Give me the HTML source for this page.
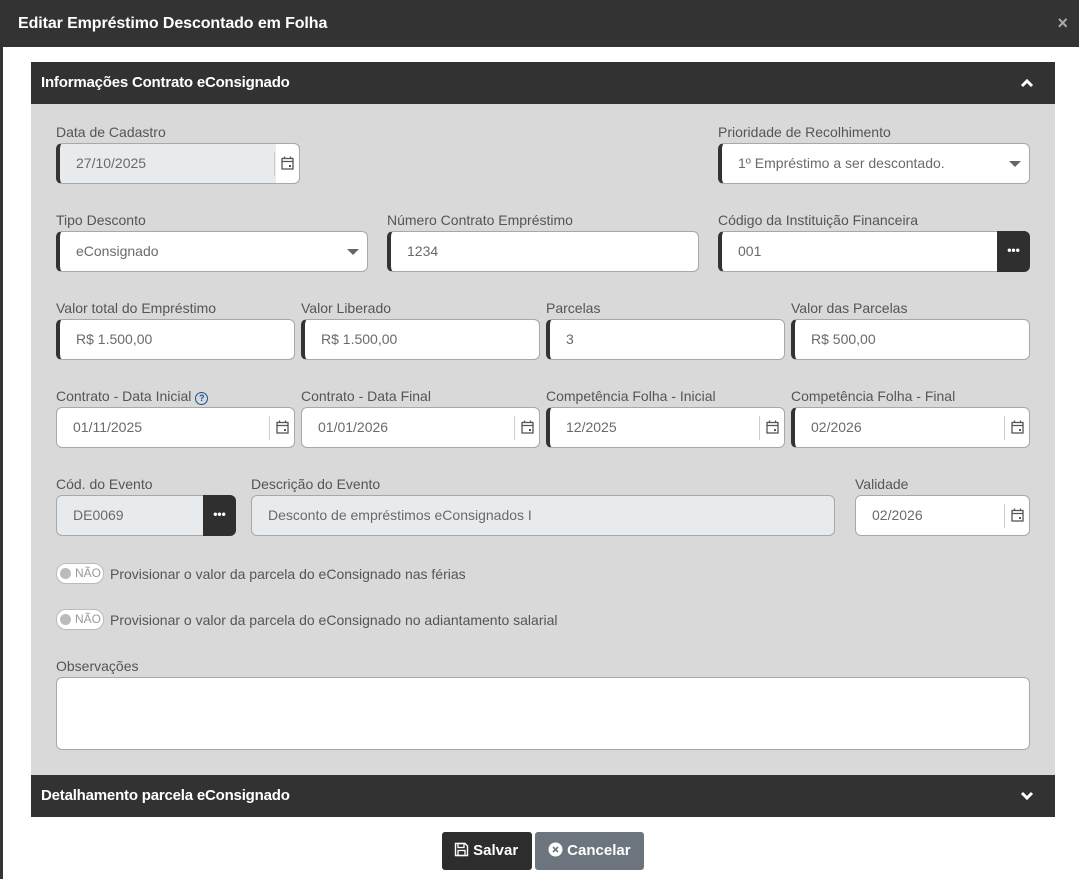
<!DOCTYPE html>
<html><head><meta charset="utf-8"><style>
*{box-sizing:border-box;margin:0;padding:0}
body{width:1079px;height:879px;background:#fff;font-family:"Liberation Sans",sans-serif;position:relative;overflow:hidden}
.a{position:absolute}
.top{left:0;top:0;width:1079px;height:47px;background:#333;color:#fff;font-weight:bold;font-size:16px;line-height:47px;padding-left:18px;letter-spacing:-0.1px}
.lstrip{left:0;top:47px;width:3px;height:832px;background:#333}
.ph{left:31px;width:1024px;height:42px;background:#323232;color:#fff;font-weight:bold;font-size:15px;line-height:42px;padding-left:10px;letter-spacing:-0.2px}
.body{left:31px;top:104px;width:1024px;height:671px;background:#d9d9d9}
.lb{font-size:14px;color:#555}
.in{height:41px;background:#fff;border:1px solid #a8a8a8;border-radius:6px;font-size:14px;color:#6a6a6a;line-height:39px;padding-left:16px}
.req{border-left:4px solid #333}
.gr{background:#e8ebee}
.cal{position:absolute;right:0;top:8px;width:25px;height:24px;border-left:1px solid #ccc}
.cal svg{position:absolute;left:6px;top:4px}
.dots{position:absolute;right:-1px;top:-1px;width:33px;height:41px;background:#2f2f2f;border-radius:0 6px 6px 0;color:#fff;font-size:12px;text-align:center;line-height:38px;font-weight:bold}
.car{position:absolute;right:8px;top:17px;border-left:6px solid transparent;border-right:6px solid transparent;border-top:6px solid #666}
.tg{width:48px;height:21px;border:1px solid #bbb;border-radius:10px;background:#fff;font-size:12px;color:#999;line-height:19px;padding-left:18px}
.tg:before{content:"";position:absolute;left:3px;top:4px;width:11px;height:11px;border-radius:50%;background:#bbb}
.tt{font-size:14px;color:#555}
.btn{height:38px;border-radius:3px;color:#fff;font-weight:bold;font-size:15px;line-height:38px}
</style></head><body>
<div class="a top">Editar Empréstimo Descontado em Folha</div>
<div class="a" style="right:11px;top:13px;color:#aaa;font-size:18px;font-weight:bold">×</div>
<div class="a lstrip"></div>
<div class="a ph" style="top:62px">Informações Contrato eConsignado</div>
<svg class="a" style="left:1020px;top:78px" width="14" height="10" viewBox="0 0 14 10"><path d="M2 8L7 3L12 8" stroke="#fff" stroke-width="3" fill="none"/></svg>
<div class="a body"></div>

<div class="a lb" style="left:56px;top:124px">Data de Cadastro</div>
<div class="a in req gr" style="left:56px;top:143px;width:244px;background:linear-gradient(90deg,#e8ebee 216px,#fff 216px)">27/10/2025<div class="cal"><svg width="13" height="14" viewBox="0 0 13 14"><rect x="1" y="2.5" width="11" height="10.5" fill="none" stroke="#555" stroke-width="1.3"/><path d="M1 5.5H12M3.5 0.5V3M9.5 0.5V3" stroke="#555" stroke-width="1.3"/><rect x="8" y="9" width="2" height="2" fill="#555"/></svg></div></div>
<div class="a lb" style="left:718px;top:124px">Prioridade de Recolhimento</div>
<div class="a in req" style="left:718px;top:143px;width:312px">1º Empréstimo a ser descontado.<div class="car"></div></div>

<div class="a lb" style="left:56px;top:212px">Tipo Desconto</div>
<div class="a in req" style="left:56px;top:231px;width:312px">eConsignado<div class="car"></div></div>
<div class="a lb" style="left:387px;top:212px">Número Contrato Empréstimo</div>
<div class="a in req" style="left:387px;top:231px;width:312px">1234</div>
<div class="a lb" style="left:718px;top:212px">Código da Instituição Financeira</div>
<div class="a in req" style="left:718px;top:231px;width:312px">001<div class="dots">•••</div></div>

<div class="a lb" style="left:56px;top:300px">Valor total do Empréstimo</div>
<div class="a in req" style="left:56px;top:319px;width:239px">R$ 1.500,00</div>
<div class="a lb" style="left:301px;top:300px">Valor Liberado</div>
<div class="a in req" style="left:301px;top:319px;width:239px">R$ 1.500,00</div>
<div class="a lb" style="left:546px;top:300px">Parcelas</div>
<div class="a in req" style="left:546px;top:319px;width:239px">3</div>
<div class="a lb" style="left:791px;top:300px">Valor das Parcelas</div>
<div class="a in req" style="left:791px;top:319px;width:239px">R$ 500,00</div>

<div class="a lb" style="left:56px;top:388px">Contrato - Data Inicial <span style="display:inline-block;width:13px;height:13px;border:1.5px solid #1a4f9c;border-radius:50%;font-size:9px;color:#1a4f9c;text-align:center;line-height:11px;font-weight:bold;vertical-align:0">?</span></div>
<div class="a lb" style="left:301px;top:388px">Contrato - Data Final</div>
<div class="a lb" style="left:546px;top:388px">Competência Folha - Inicial</div>
<div class="a lb" style="left:791px;top:388px">Competência Folha - Final</div>
<div class="a in" style="left:56px;top:407px;width:239px">01/11/2025<div class="cal"><svg width="13" height="14" viewBox="0 0 13 14"><rect x="1" y="2.5" width="11" height="10.5" fill="none" stroke="#555" stroke-width="1.3"/><path d="M1 5.5H12M3.5 0.5V3M9.5 0.5V3" stroke="#555" stroke-width="1.3"/><rect x="8" y="9" width="2" height="2" fill="#555"/></svg></div></div>
<div class="a in" style="left:301px;top:407px;width:239px">01/01/2026<div class="cal"><svg width="13" height="14" viewBox="0 0 13 14"><rect x="1" y="2.5" width="11" height="10.5" fill="none" stroke="#555" stroke-width="1.3"/><path d="M1 5.5H12M3.5 0.5V3M9.5 0.5V3" stroke="#555" stroke-width="1.3"/><rect x="8" y="9" width="2" height="2" fill="#555"/></svg></div></div>
<div class="a in req" style="left:546px;top:407px;width:239px">12/2025<div class="cal"><svg width="13" height="14" viewBox="0 0 13 14"><rect x="1" y="2.5" width="11" height="10.5" fill="none" stroke="#555" stroke-width="1.3"/><path d="M1 5.5H12M3.5 0.5V3M9.5 0.5V3" stroke="#555" stroke-width="1.3"/><rect x="8" y="9" width="2" height="2" fill="#555"/></svg></div></div>
<div class="a in req" style="left:791px;top:407px;width:239px">02/2026<div class="cal"><svg width="13" height="14" viewBox="0 0 13 14"><rect x="1" y="2.5" width="11" height="10.5" fill="none" stroke="#555" stroke-width="1.3"/><path d="M1 5.5H12M3.5 0.5V3M9.5 0.5V3" stroke="#555" stroke-width="1.3"/><rect x="8" y="9" width="2" height="2" fill="#555"/></svg></div></div>

<div class="a lb" style="left:56px;top:476px">Cód. do Evento</div>
<div class="a in gr" style="left:56px;top:495px;width:180px">DE0069<div class="dots">•••</div></div>
<div class="a lb" style="left:251px;top:476px">Descrição do Evento</div>
<div class="a in gr" style="left:251px;top:495px;width:584px">Desconto de empréstimos eConsignados I</div>
<div class="a lb" style="left:855px;top:476px">Validade</div>
<div class="a in" style="left:855px;top:495px;width:175px">02/2026<div class="cal"><svg width="13" height="14" viewBox="0 0 13 14"><rect x="1" y="2.5" width="11" height="10.5" fill="none" stroke="#555" stroke-width="1.3"/><path d="M1 5.5H12M3.5 0.5V3M9.5 0.5V3" stroke="#555" stroke-width="1.3"/><rect x="8" y="9" width="2" height="2" fill="#555"/></svg></div></div>

<div class="a tg" style="left:56px;top:563px">NÃO</div>
<div class="a tt" style="left:110px;top:566px">Provisionar o valor da parcela do eConsignado nas férias</div>
<div class="a tg" style="left:56px;top:609px">NÃO</div>
<div class="a tt" style="left:110px;top:612px">Provisionar o valor da parcela do eConsignado no adiantamento salarial</div>

<div class="a lb" style="left:56px;top:658px">Observações</div>
<div class="a in" style="left:56px;top:677px;width:974px;height:73px"></div>

<div class="a ph" style="top:775px">Detalhamento parcela eConsignado</div>
<svg class="a" style="left:1020px;top:791px" width="14" height="10" viewBox="0 0 14 10"><path d="M2 2L7 7L12 2" stroke="#fff" stroke-width="3" fill="none"/></svg>

<div class="a btn" style="left:442px;top:832px;width:90px;background:#2d2d2d;padding-left:12px"><svg style="vertical-align:-2px" width="15" height="15" viewBox="0 0 15 15"><path d="M1.5 1.5H11L13.5 4V13.5H1.5Z" fill="none" stroke="#fff" stroke-width="1.4"/><rect x="4" y="1.5" width="6" height="4" fill="none" stroke="#fff" stroke-width="1.3"/><rect x="4" y="8.5" width="7" height="5" fill="none" stroke="#fff" stroke-width="1.3"/></svg> Salvar</div>
<div class="a btn" style="left:535px;top:832px;width:109px;background:#6c757d;padding-left:13px"><svg style="vertical-align:-2px" width="15" height="15" viewBox="0 0 15 15"><circle cx="7.5" cy="7.5" r="7" fill="#fff"/><path d="M5 5L10 10M10 5L5 10" stroke="#6c757d" stroke-width="1.6"/></svg> Cancelar</div>
</body></html>
